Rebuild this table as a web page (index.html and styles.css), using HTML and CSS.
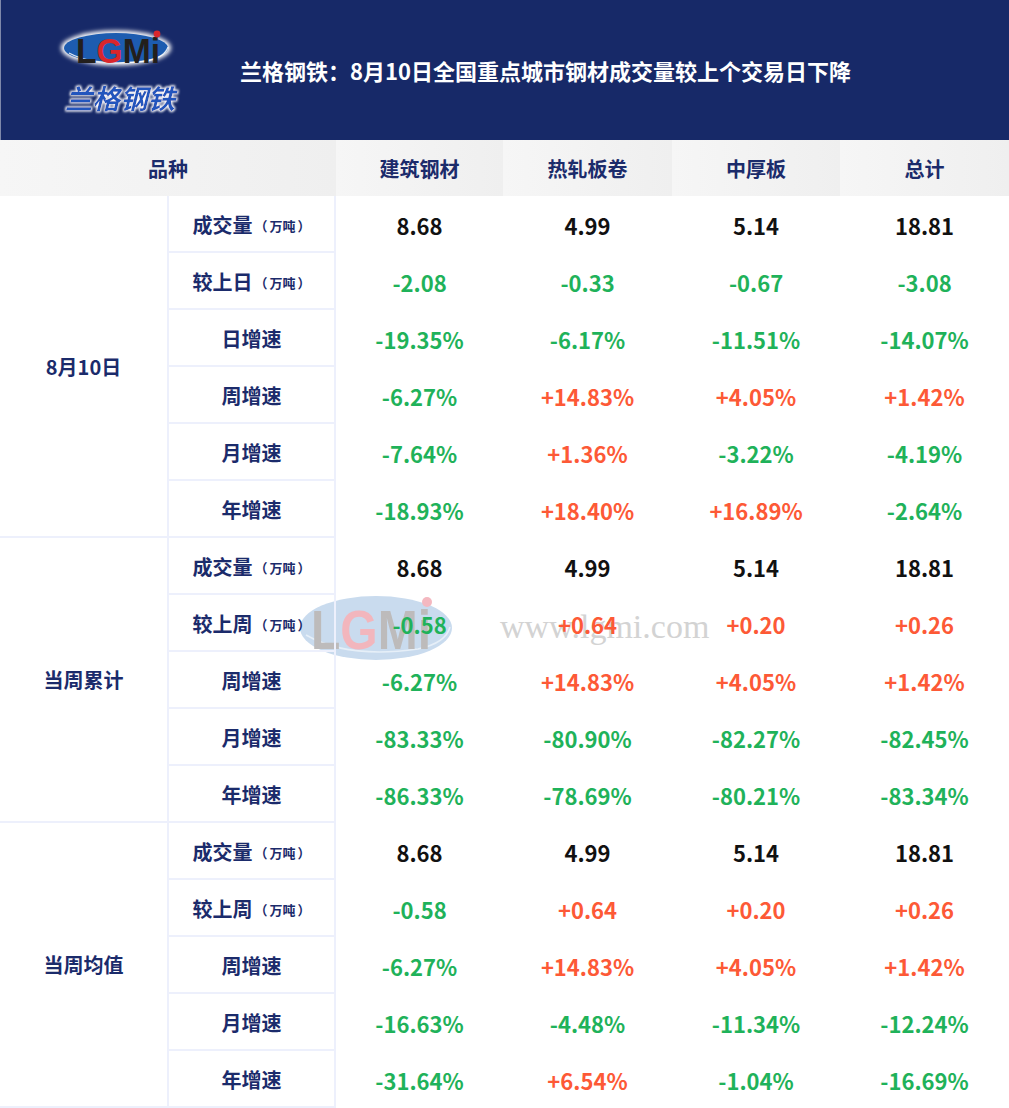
FILE: index.html
```html
<!DOCTYPE html>
<html lang="zh">
<head>
<meta charset="utf-8">
<title>兰格钢铁</title>
<link rel="stylesheet" href="styles.css">
</head>
<body>
<div class="page">
  <header class="banner">
    <svg class="logo" viewBox="0 0 130 95" width="130" height="95">
      <defs>
        <filter id="glow" x="-20%" y="-40%" width="140%" height="180%">
          <feGaussianBlur stdDeviation="2.2"/>
        </filter>
        <filter id="glow2" x="-10%" y="-30%" width="120%" height="160%">
          <feMorphology operator="dilate" radius="1.2" in="SourceAlpha" result="d"/>
          <feGaussianBlur in="d" stdDeviation="0.9" result="b"/>
          <feFlood flood-color="#ffffff"/>
          <feComposite in2="b" operator="in" result="w"/>
          <feMerge><feMergeNode in="w"/><feMergeNode in="SourceGraphic"/></feMerge>
        </filter>
      </defs>
      <ellipse cx="61" cy="25" rx="55" ry="17.5" fill="#ffffff" filter="url(#glow)"/>
      <ellipse cx="61" cy="25" rx="52" ry="15" fill="#1d5cb0"/>
      <path d="M 14 30 Q 40 44 92 38 Q 110 34 113 24" fill="none" stroke="#ffffff" stroke-width="1.3" opacity="0.85"/>
      <text x="21" y="40" class="lg" textLength="84" lengthAdjust="spacingAndGlyphs"><tspan fill="#231f1c">L</tspan><tspan fill="#d9262c">G</tspan><tspan fill="#231f1c">Mi</tspan></text>
      <circle cx="102" cy="11" r="3.4" fill="#d9262c"/>
      <text x="10" y="86" class="cn" filter="url(#glow2)" textLength="110" lengthAdjust="spacingAndGlyphs">兰格钢铁</text>
    </svg>
    <h1 class="title">兰格钢铁：8月10日全国重点城市钢材成交量较上个交易日下降</h1>
  </header>

  <div class="table-wrap">
    <div class="watermark" aria-hidden="true">
      <svg viewBox="0 0 160 70" width="160" height="70">
        <ellipse cx="78" cy="37" rx="76" ry="32" fill="#c9dbee"/>
        <path d="M 8 44 Q 50 68 120 58 Q 148 52 152 36" fill="none" stroke="#e6eff8" stroke-width="1.6"/>
        <text x="13" y="58" class="wm-lg" textLength="120" lengthAdjust="spacingAndGlyphs"><tspan fill="#bdbbbb">L</tspan><tspan fill="#f2b6bd">G</tspan><tspan fill="#bdbbbb">Mi</tspan></text>
        <circle cx="129" cy="11" r="5" fill="#f4b8c0"/>
      </svg>
      <span class="wm-url">www.lgmi.com</span>
    </div>

    <div class="grid">
      <div class="th th-wide">品种</div>
      <div class="th">建筑钢材</div>
      <div class="th">热轧板卷</div>
      <div class="th">中厚板</div>
      <div class="th">总计</div>

      <div class="group g6">8月10日</div>
      <div class="lbl">成交量<small><span class="pl">（</span>万吨<span class="pr">）</span></small></div>
      <div class="v">8.68</div><div class="v">4.99</div><div class="v">5.14</div><div class="v">18.81</div>
      <div class="lbl">较上日<small><span class="pl">（</span>万吨<span class="pr">）</span></small></div>
      <div class="v dn">-2.08</div><div class="v dn">-0.33</div><div class="v dn">-0.67</div><div class="v dn">-3.08</div>
      <div class="lbl">日增速</div>
      <div class="v dn">-19.35%</div><div class="v dn">-6.17%</div><div class="v dn">-11.51%</div><div class="v dn">-14.07%</div>
      <div class="lbl">周增速</div>
      <div class="v dn">-6.27%</div><div class="v up">+14.83%</div><div class="v up">+4.05%</div><div class="v up">+1.42%</div>
      <div class="lbl">月增速</div>
      <div class="v dn">-7.64%</div><div class="v up">+1.36%</div><div class="v dn">-3.22%</div><div class="v dn">-4.19%</div>
      <div class="lbl">年增速</div>
      <div class="v dn">-18.93%</div><div class="v up">+18.40%</div><div class="v up">+16.89%</div><div class="v dn">-2.64%</div>

      <div class="group g5">当周累计</div>
      <div class="lbl">成交量<small><span class="pl">（</span>万吨<span class="pr">）</span></small></div>
      <div class="v">8.68</div><div class="v">4.99</div><div class="v">5.14</div><div class="v">18.81</div>
      <div class="lbl">较上周<small><span class="pl">（</span>万吨<span class="pr">）</span></small></div>
      <div class="v dn">-0.58</div><div class="v up">+0.64</div><div class="v up">+0.20</div><div class="v up">+0.26</div>
      <div class="lbl">周增速</div>
      <div class="v dn">-6.27%</div><div class="v up">+14.83%</div><div class="v up">+4.05%</div><div class="v up">+1.42%</div>
      <div class="lbl">月增速</div>
      <div class="v dn">-83.33%</div><div class="v dn">-80.90%</div><div class="v dn">-82.27%</div><div class="v dn">-82.45%</div>
      <div class="lbl">年增速</div>
      <div class="v dn">-86.33%</div><div class="v dn">-78.69%</div><div class="v dn">-80.21%</div><div class="v dn">-83.34%</div>

      <div class="group g5">当周均值</div>
      <div class="lbl">成交量<small><span class="pl">（</span>万吨<span class="pr">）</span></small></div>
      <div class="v">8.68</div><div class="v">4.99</div><div class="v">5.14</div><div class="v">18.81</div>
      <div class="lbl">较上周<small><span class="pl">（</span>万吨<span class="pr">）</span></small></div>
      <div class="v dn">-0.58</div><div class="v up">+0.64</div><div class="v up">+0.20</div><div class="v up">+0.26</div>
      <div class="lbl">周增速</div>
      <div class="v dn">-6.27%</div><div class="v up">+14.83%</div><div class="v up">+4.05%</div><div class="v up">+1.42%</div>
      <div class="lbl">月增速</div>
      <div class="v dn">-16.63%</div><div class="v dn">-4.48%</div><div class="v dn">-11.34%</div><div class="v dn">-12.24%</div>
      <div class="lbl">年增速</div>
      <div class="v dn">-31.64%</div><div class="v up">+6.54%</div><div class="v dn">-1.04%</div><div class="v dn">-16.69%</div>
    </div>
  </div>
</div>
</body>
</html>
```

FILE: styles.css
```css
* { box-sizing: border-box; }

html, body {
  margin: 0;
  padding: 0;
  background: #ffffff;
}

body {
  font-family: "Noto Sans CJK SC", "Noto Sans", sans-serif;
  width: 1009px;
}

.page {
  width: 1009px;
}

.banner {
  height: 140px;
  background: #172968;
  border-left: 1px solid #7f88aa;
  display: flex;
  align-items: center;
  padding-left: 54px;
}

.logo {
  display: block;
  flex: none;
}

.logo .lg {
  font-family: "Liberation Sans", sans-serif;
  font-weight: 700;
  font-size: 35px;
}

.logo .cn {
  font-family: "Noto Sans CJK SC", sans-serif;
  font-weight: 700;
  font-size: 27px;
  fill: #2354bd;
  font-style: italic;
}

.title {
  margin: 0 0 0 55px;
  color: #ffffff;
  font-size: 22px;
  font-weight: 700;
  white-space: nowrap;
}

.table-wrap {
  position: relative;
}

.watermark {
  position: absolute;
  left: 298px;
  top: 451px;
  display: flex;
  align-items: center;
  gap: 42px;
  z-index: 0;
  pointer-events: none;
}

.watermark svg { display: block; }

.wm-lg {
  font-family: "Liberation Sans", sans-serif;
  font-weight: 700;
  font-size: 56px;
}

.wm-url {
  font-family: "Liberation Serif", serif;
  font-size: 34px;
  line-height: 1;
  color: #d3d3d3;
  margin-top: 2px;
}

.grid {
  position: relative;
  z-index: 1;
  display: grid;
  grid-template-columns: 167px 169px 167px 169px 168px 169px;
  grid-template-rows: 56px;
  grid-auto-rows: 57px;
}

.th {
  display: flex;
  align-items: center;
  justify-content: center;
  background: linear-gradient(to right, #f6f6f6, #efefef);
  color: #1b2b6b;
  font-size: 20px;
  font-weight: 700;
}

.th-wide {
  grid-column: span 2;
}

.group {
  display: flex;
  align-items: center;
  justify-content: center;
  color: #1b2b6b;
  font-size: 20px;
  font-weight: 700;
  border-bottom: 2px solid #edf0fc;
}

.g6 { grid-row: span 6; }
.g5 { grid-row: span 5; }

.lbl {
  display: flex;
  align-items: center;
  justify-content: center;
  color: #1b2b6b;
  font-size: 20px;
  font-weight: 700;
  border-left: 2px solid #edf0fc;
  border-right: 2px solid #edf0fc;
  border-bottom: 2px solid #edf0fc;
  padding-top: 2px;
}

.lbl small {
  display: inline-flex;
  align-items: center;
  font-size: 13px;
  font-weight: 700;
  padding-top: 2px;
}

.lbl small .pl {
  padding-left: 2px;
  padding-right: 2px;
}

.lbl small .pr {
  padding-left: 2px;
}

.v {
  display: flex;
  align-items: center;
  justify-content: center;
  font-size: 22px;
  font-weight: 700;
  color: #111111;
}

.v.dn { color: #1fb25a; }
.v.up { color: #fd5936; }
```
